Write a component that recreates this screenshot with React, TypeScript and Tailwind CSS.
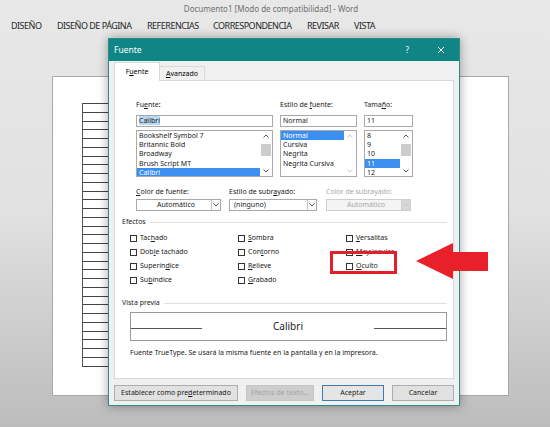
const ui = { fontFamily: '"Noto Sans", "Open Sans", sans-serif' };

const menu: [string, string][] = [
  ["DISEÑO", "w-[46px]"],
  ["DISEÑO DE PÁGINA", "w-[90px]"],
  ["REFERENCIAS", "w-[66px]"],
  ["CORRESPONDENCIA", "w-[94px]"],
  ["REVISAR", "w-[47px]"],
  ["VISTA", "w-[40px]"],
];

function Chevron({ up, light }: { up?: boolean; light?: boolean }) {
  return (
    <svg width="6" height="4" viewBox="0 0 6 4" className="block">
      <polyline
        points={up ? "0.5,3.5 3,1 5.5,3.5" : "0.5,0.5 3,3 5.5,0.5"}
        fill="none"
        stroke={light ? "#c8c8c8" : "#555"}
        strokeWidth="1"
      />
    </svg>
  );
}

function Scrollbar({ thumb, light }: { thumb?: boolean; light?: boolean }) {
  return (
    <div className="flex w-[12px] flex-col items-center">
      <div className="flex h-[10px] items-center justify-center">
        <Chevron up light={light} />
      </div>
      {thumb ? <div className="mt-[3px] h-[12px] w-[10px] bg-[#cdcdcd]" /> : null}
      <div className="flex-1" />
      <div className="flex h-[10px] items-center justify-center">
        <Chevron light={light} />
      </div>
    </div>
  );
}

function ListBox({
  items,
  selected,
  thumb,
  light,
}: {
  items: string[];
  selected: string;
  thumb?: boolean;
  light?: boolean;
}) {
  return (
    <div className="mt-[3px] flex h-[47px] overflow-hidden border border-[#a9a9a9] bg-white">
      <div className="flex-1 overflow-hidden">
        {items.map((it) => (
          <div
            key={it}
            className={
              "h-[9.2px] whitespace-nowrap pl-[2px] leading-[9.2px] " +
              (it === selected ? "bg-[#3b8ff0] text-white" : "text-[#1a1a1a]")
            }>
            {it}
          </div>
        ))}
      </div>
      <Scrollbar thumb={thumb} light={light} />
    </div>
  );
}

function Check({ label, k }: { label: string; k: number }) {
  return (
    <div className="flex h-[14px] w-[108px] items-center">
      <div className="h-[7px] w-[7px] border border-[#333] bg-white" />
      <span className="ml-[3px] text-[#1a1a1a]">
        {label.slice(0, k)}
        <u className="underline-offset-1">{label[k]}</u>
        {label.slice(k + 1)}
      </span>
    </div>
  );
}

function Dropdown({
  text,
  center,
  disabled,
  w,
}: {
  text: string;
  center?: boolean;
  disabled?: boolean;
  w: string;
}) {
  return (
    <div
      className={
        "mt-[2px] flex h-[12px] border " +
        w +
        (disabled ? " border-[#cfcfcf] bg-[#f4f4f4]" : " border-[#a9a9a9] bg-white")
      }>
      <div
        className={
          "flex-1 pl-[4px] leading-[10px] " +
          (center ? "text-center" : "") +
          (disabled ? " text-[#a8a8a8]" : " text-[#1a1a1a]")
        }>
        {text}
      </div>
      <div
        className={
          "flex w-[9px] items-center justify-center border-l " +
          (disabled ? "border-[#cfcfcf] bg-[#d6d6d6]" : "border-[#c8c8c8] bg-[#fafafa]")
        }>
        <Chevron light={disabled} />
      </div>
    </div>
  );
}

function Btn({
  children,
  w,
  kind,
}: {
  children: React.ReactNode;
  w: string;
  kind?: "primary" | "disabled";
}) {
  const tone =
    kind === "primary"
      ? "border-[#3a7cb3] bg-[#e5e5e5] text-[#1a1a1a]"
      : kind === "disabled"
        ? "border-[#c6c6c6] bg-[#cdcdcd] text-[#a4a4a4]"
        : "border-[#adadad] bg-[#e1e1e1] text-[#1a1a1a]";
  return (
    <div
      className={
        "flex h-[16px] items-center justify-center border text-[7px] " + w + " " + tone
      }>
      {children}
    </div>
  );
}

export default function App() {
  return (
    <div
      className="relative h-[427px] w-[550px] overflow-hidden bg-gradient-to-b from-[#e8e8e8] via-[#e1e1e1] to-[#bcbcbc]"
      style={ui}>
      {/* window title + ribbon tabs */}
      <div className="flex h-[18px] items-center justify-center pr-[8px] text-[8px] text-[#707070]">
        Documento1 [Modo de compatibilidad] - Word
      </div>
      <div className="flex h-[16px] items-center pl-[11px] text-[9px] tracking-[-0.5px] text-[#262626]">
        {menu.map(([m, w]) => (
          <div key={m} className={w + " whitespace-nowrap"}>
            {m}
          </div>
        ))}
      </div>

      {/* document page */}
      <div className="ml-[52px] mt-[42px] h-[320px] w-[457px] border border-[#a8a8a8] bg-white pl-[29px] pt-[26px]">
        <div className="w-[60px] border-l border-[#555]">
          {Array.from({ length: 30 }).map((_, i) => (
            <div key={i} className="h-[8.75px] border-t border-[#444]" />
          ))}
          <div className="border-t border-[#444]" />
        </div>
      </div>

      {/* Fuente dialog */}
      <div className="absolute left-[108px] top-[38px] flex h-[368px] w-[352px] flex-col border border-[#2b8b8b] bg-[#f0f0f0] shadow-[0_0_10px_rgba(0,0,0,0.35)]">
        <div className="flex h-[22px] items-center bg-[#0f8585] pl-[5px] text-[8.5px] text-white">
          <span>Fuente</span>
          <span className="ml-auto mr-[28px] text-[8px]">?</span>
          <svg width="8" height="8" viewBox="0 0 8 8" className="mr-[14px]">
            <path d="M1 1 L7 7 M7 1 L1 7" stroke="#fff" strokeWidth="1" />
          </svg>
        </div>

        <div className="flex flex-col px-[5px] pt-[1px] text-[7px]">
          <div className="flex items-end">
            <div className="relative z-10 flex h-[19px] w-[46px] items-center justify-center border border-b-0 border-[#d9d9d9] bg-white">
              F<u className="underline-offset-1">u</u>ente
            </div>
            <div className="flex h-[15px] w-[45px] items-center justify-center border border-l-0 border-b-0 border-[#d9d9d9] bg-[#f0f0f0]">
              <u className="underline-offset-1">A</u>vanzado
            </div>
          </div>

          <div className="-mt-px flex h-[299px] w-[340px] flex-col border border-[#d9d9d9] bg-white text-[#1a1a1a]">
            {/* font / style / size */}
            <div className="ml-[21px] mt-[19px] flex gap-[7px]">
              <div className="w-[137px]">
                <div className="h-[10px] leading-[10px]">
                  Fu<u className="underline-offset-1">e</u>nte:
                </div>
                <div className="mt-[5px] h-[12px] border border-[#a9a9a9] pl-[2px] leading-[10px]">
                  <span className="bg-[#b9d6f2]">Calibri</span>
                </div>
                <ListBox
                  items={["Bookshelf Symbol 7", "Britannic Bold", "Broadway", "Brush Script MT", "Calibri"]}
                  selected="Calibri"
                  thumb
                />
              </div>
              <div className="w-[77px]">
                <div className="h-[10px] leading-[10px]">
                  Estilo de <u className="underline-offset-1">f</u>uente:
                </div>
                <div className="mt-[5px] h-[12px] border border-[#a9a9a9] pl-[2px] leading-[10px]">
                  Normal
                </div>
                <div className="mt-[3px] flex h-[47px] overflow-hidden border border-[#a9a9a9] bg-white">
                  <div className="flex-1">
                    {["Normal", "Cursiva", "Negrita", "Negrita Cursiva"].map((it) => (
                      <div
                        key={it}
                        className={
                          "h-[9.2px] whitespace-nowrap pl-[2px] leading-[9.2px] " +
                          (it === "Normal" ? "bg-[#3b8ff0] text-white" : "")
                        }>
                        {it}
                      </div>
                    ))}
                  </div>
                  <Scrollbar light />
                </div>
              </div>
              <div className="w-[49px]">
                <div className="h-[10px] leading-[10px]">
                  Tama<u className="underline-offset-1">ñ</u>o:
                </div>
                <div className="mt-[5px] h-[12px] border border-[#a9a9a9] pl-[2px] leading-[10px]">
                  11
                </div>
                <ListBox items={["8", "9", "10", "11", "12"]} selected="11" thumb />
              </div>
            </div>

            {/* colour / underline */}
            <div className="ml-[21px] mt-[10px] flex">
              <div className="w-[93px]">
                <div className="h-[10px] leading-[10px]">
                  <u className="underline-offset-1">C</u>olor de fuente:
                </div>
                <Dropdown text="Automático" center w="w-[85px]" />
              </div>
              <div className="w-[97px]">
                <div className="h-[10px] leading-[10px]">
                  Estilo de subr<u className="underline-offset-1">a</u>yado:
                </div>
                <Dropdown text="(ninguno)" w="w-[88px]" />
              </div>
              <div className="w-[86px]">
                <div className="h-[10px] leading-[10px] text-[#a8a8a8]">Color de subrayado:</div>
                <Dropdown text="Automático" center disabled w="w-[85px]" />
              </div>
            </div>

            {/* effects */}
            <div className="ml-[7px] mr-[6px] mt-[6px] flex h-[10px] items-center gap-[4px]">
              <span>Efectos</span>
              <div className="h-px flex-1 bg-[#e0e0e0]" />
            </div>
            <div className="ml-[15px] mt-[4px] grid w-[324px] grid-cols-3">
              <div>
                <Check label="Tachado" k={3} />
                <Check label="Doble tachado" k={3} />
                <Check label="Superíndice" k={7} />
                <Check label="Subíndice" k={2} />
              </div>
              <div>
                <Check label="Sombra" k={0} />
                <Check label="Contorno" k={3} />
                <Check label="Relieve" k={0} />
                <Check label="Grabado" k={0} />
              </div>
              <div>
                <Check label="Versalitas" k={0} />
                <Check label="Mayúsculas" k={0} />
                <Check label="Oculto" k={0} />
              </div>
            </div>

            {/* preview */}
            <div className="ml-[7px] mr-[6px] mt-[11px] flex h-[10px] items-center gap-[4px]">
              <span>Vista previa</span>
              <div className="h-px flex-1 bg-[#e0e0e0]" />
            </div>
            <div className="ml-[15px] mt-[4px] flex h-[29px] w-[317px] items-center border border-[#9a9a9a]">
              <div className="mt-[4px] h-px w-[71px] bg-[#555]" />
              <div className="flex-1 text-center text-[10px] text-[#222]">Calibri</div>
              <div className="mt-[4px] h-px w-[72px] bg-[#555]" />
            </div>
            <div className="ml-[15px] mt-[7px] h-[10px] leading-[10px]">
              Fuente TrueType. Se usará la misma fuente en la pantalla y en la impresora.
            </div>
          </div>

          <div className="mt-[6px] flex">
            <Btn w="w-[124px]">
              Establecer como pre<u className="underline-offset-1">d</u>eterminado
            </Btn>
            <div className="ml-[8px]">
              <Btn w="w-[68px]" kind="disabled">
                Efectos de texto...
              </Btn>
            </div>
            <div className="ml-[8px]">
              <Btn w="w-[62px]" kind="primary">
                Aceptar
              </Btn>
            </div>
            <div className="ml-[8px]">
              <Btn w="w-[62px]">Cancelar</Btn>
            </div>
          </div>
        </div>
      </div>

      {/* annotation */}
      <div className="absolute left-[330px] top-[251px] h-[23px] w-[67px] border-[3px] border-[#e3202a]" />
      <svg
        className="absolute left-[416px] top-[243px]"
        width="72"
        height="36"
        viewBox="0 0 72 36">
        <polygon points="0,18 37,0 37,9 72,9 72,28 37,28 37,36" fill="#e8202a" />
      </svg>
    </div>
  );
}
